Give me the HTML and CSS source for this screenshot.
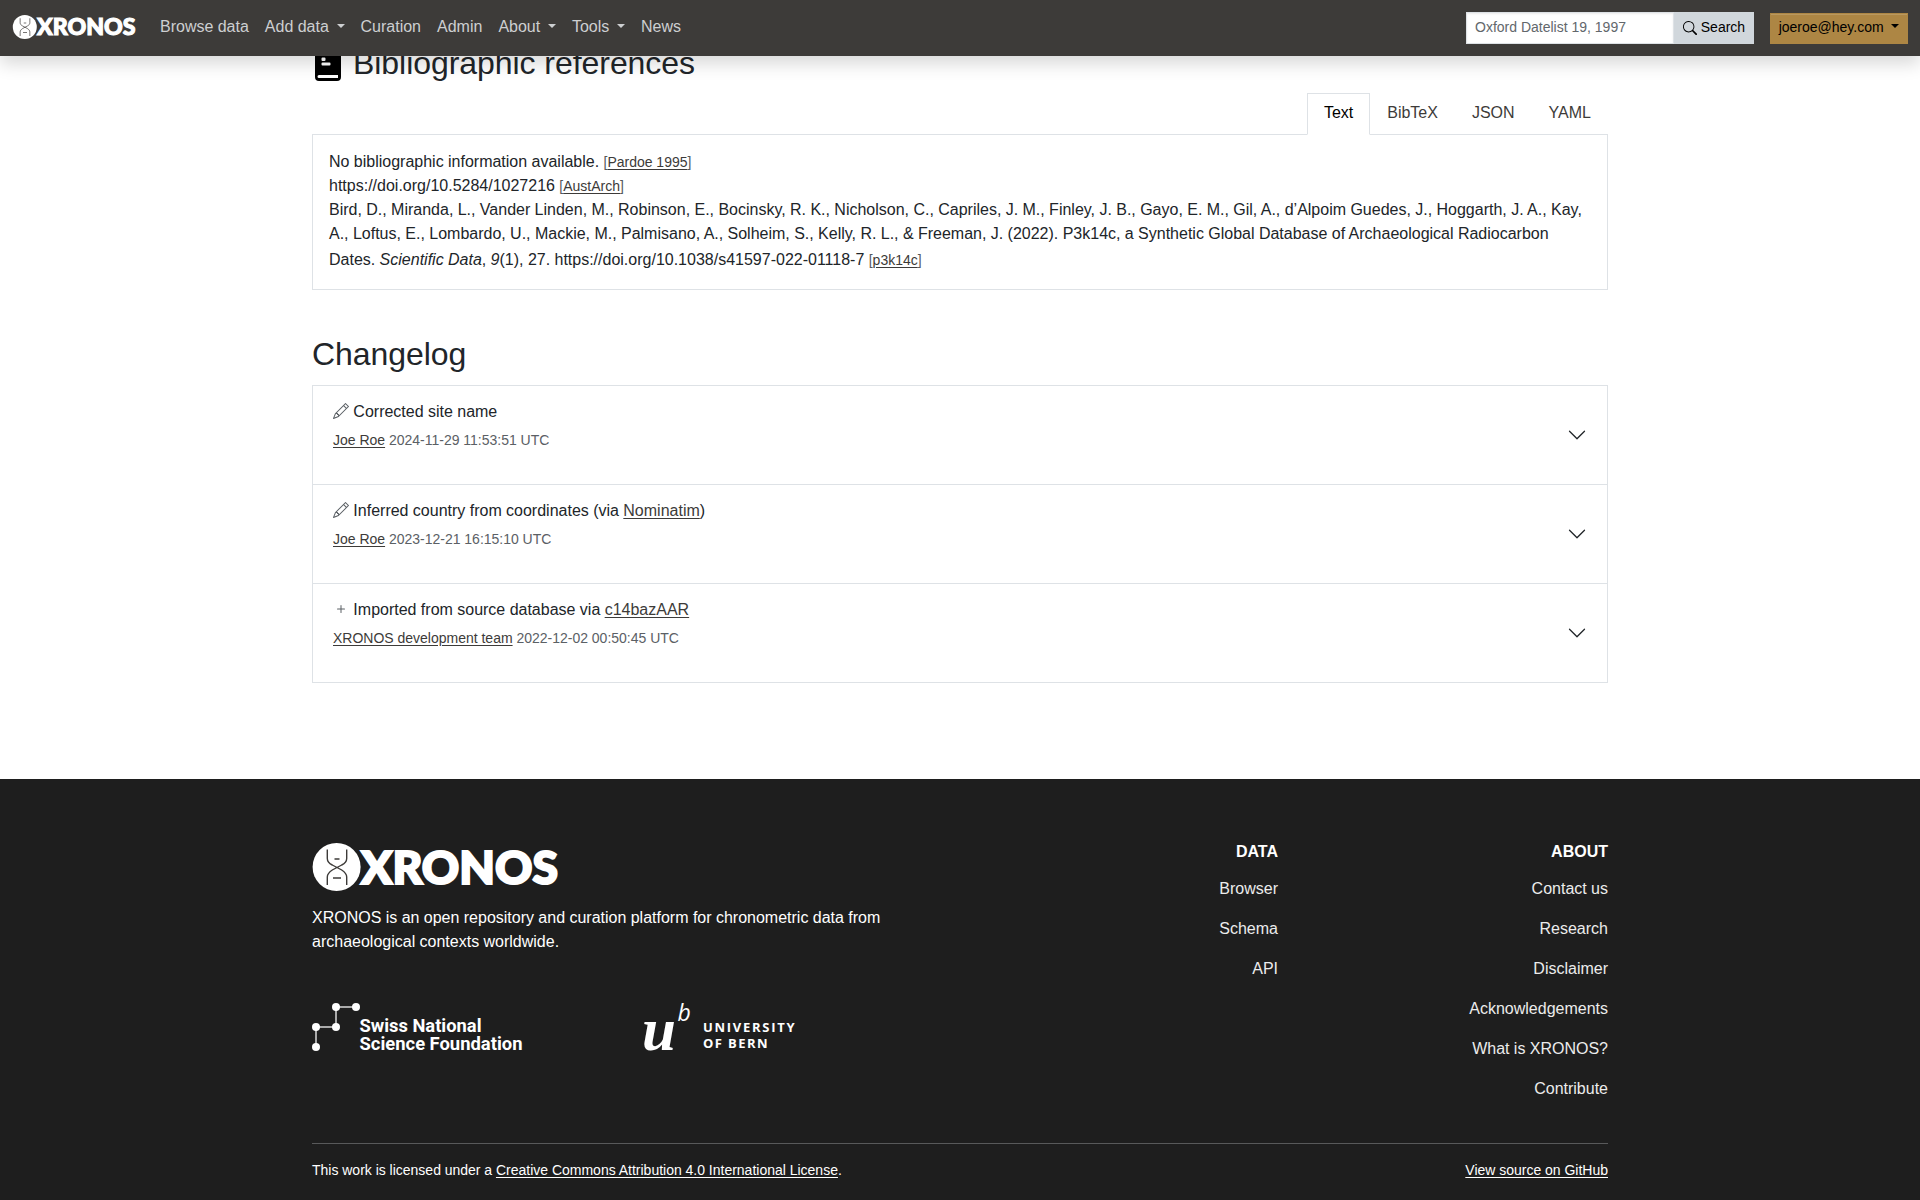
FILE: index.html
```html
<!DOCTYPE html>
<html lang="en">
<head>
<meta charset="utf-8">
<title>XRONOS</title>
<link rel="stylesheet" href="styles.css">
</head>
<body>
<svg class="defs" width="0" height="0">
  <symbol id="logo" viewBox="0 0 248 48">
    <circle cx="24.600" cy="24" r="24" fill="#fff"/>
    <path d="M15.300 6.500v9c0 3 2 5 5 6.500l9.400 5c3 2 5 4 5 7v8M34.700 6.500v9c0 3-2 5-5 6.500l-9.400 5c-3 2-5 4-5 7v8M22.500 16h5M21 35h8" fill="none" stroke="#3d3b39" stroke-width="1.400"/>
    <text class="logo-word" x="49" y="40.500" textLength="197" lengthAdjust="spacingAndGlyphs">XRONOS</text>
  </symbol>
  <symbol id="pencil" viewBox="0 0 16 16"><path d="M12.146.146a.5.5 0 0 1 .708 0l3 3a.5.5 0 0 1 0 .708l-10 10a.5.5 0 0 1-.168.110l-5 2a.5.5 0 0 1-.65-.65l2-5a.5.5 0 0 1 .11-.168zM11.207 2.500 13.500 4.793 14.793 3.500 12.500 1.207zm1.586 3L10.500 3.207 4 9.707V10h.5a.5.5 0 0 1 .5.5v.5h.5a.5.5 0 0 1 .5.5v.5h.293zm-9.761 5.175-.106.106-1.528 3.821 3.821-1.528.106-.106A.5.5 0 0 1 5 12.500V12h-.5a.5.5 0 0 1-.5-.5V11h-.5a.5.5 0 0 1-.468-.325"/></symbol>
  <symbol id="plus" viewBox="0 0 16 16"><path d="M8 4a.5.5 0 0 1 .5.5v3h3a.5.5 0 0 1 0 1h-3v3a.5.5 0 0 1-1 0v-3h-3a.5.5 0 0 1 0-1h3v-3A.5.5 0 0 1 8 4"/></symbol>
  <symbol id="chevron" viewBox="0 0 16 16"><path fill-rule="evenodd" d="M1.646 4.646a.5.5 0 0 1 .708 0L8 10.293l5.646-5.647a.5.5 0 0 1 .708.708l-6 6a.5.5 0 0 1-.708 0l-6-6a.5.5 0 0 1 0-.708"/></symbol>
</svg>

<nav class="navbar">
  <a class="brand"><svg class="brand-logo"><use href="#logo"/></svg></a>
  <div class="nav-links">
    <a>Browse data</a><a class="caret">Add data</a><a>Curation</a><a>Admin</a><a class="caret">About</a><a class="caret">Tools</a><a>News</a>
  </div>
  <form class="search">
    <input type="text" placeholder="Oxford Datelist 19, 1997">
    <button type="button"><svg class="search-icon" viewBox="0 0 16 16"><path d="M11.742 10.344a6.500 6.500 0 1 0-1.397 1.398h-.001q.044.060.098.115l3.850 3.850a1 1 0 0 0 1.415-1.414l-3.850-3.850a1 1 0 0 0-.115-.1zM12 6.500a5.500 5.500 0 1 1-11 0 5.500 5.500 0 0 1 11 0"/></svg> Search</button>
  </form>
  <button type="button" class="user caret">joeroe@hey.com</button>
</nav>

<main class="container">
  <h2 class="refs-title"><svg class="book" viewBox="0 0 26 32"><path fill-rule="evenodd" d="M4 0h18a4 4 0 0 1 4 4v24a4 4 0 0 1-4 4H4a4 4 0 0 1-4-4V4a4 4 0 0 1 4-4zM4 26a1.500 1.500 0 0 0 0 3H23v-3zM7.500 8.500a1 1 0 0 0-1 1V11a1 1 0 0 0 1 1h2a1 1 0 0 0 1-1V9.500a1 1 0 0 0-1-1zM7.500 13.500a1 1 0 0 0-1 1v1a1 1 0 0 0 1 1h7a1 1 0 0 0 1-1v-1a1 1 0 0 0-1-1z"/></svg><span>Bibliographic references</span></h2>
  <div class="tabs"><a class="active">Text</a><a>BibTeX</a><a>JSON</a><a>YAML</a></div>
  <div class="refs">
    <div>No bibliographic information available. <small>[<a>Pardoe 1995</a>]</small></div>
    <div>https://doi.org/10.5284/1027216 <small>[<a>AustArch</a>]</small></div>
    <div>Bird, D., Miranda, L., Vander Linden, M., Robinson, E., Bocinsky, R. K., Nicholson, C., Capriles, J. M., Finley, J. B., Gayo, E. M., Gil, A., d’Alpoim Guedes, J., Hoggarth, J. A., Kay, A., Loftus, E., Lombardo, U., Mackie, M., Palmisano, A., Solheim, S., Kelly, R. L., &amp; Freeman, J. (2022). P3k14c, a Synthetic Global Database of Archaeological Radiocarbon <span class="tail">Dates. <i>Scientific Data</i>, <i>9</i>(1), 27. https://doi.org/10.1038/s41597-022-01118-7 <small>[<a>p3k14c</a>]</small></span></div>
  </div>

  <h2 class="log-title">Changelog</h2>
  <div class="log">
    <div class="entry">
      <div><p><svg class="icon"><use href="#pencil"/></svg> Corrected site name</p>
      <p class="meta"><a>Joe Roe</a> 2024-11-29 11:53:51 UTC</p></div>
      <svg class="chev"><use href="#chevron"/></svg>
    </div>
    <div class="entry">
      <div><p><svg class="icon"><use href="#pencil"/></svg> Inferred country from coordinates (via <a>Nominatim</a>)</p>
      <p class="meta"><a>Joe Roe</a> 2023-12-21 16:15:10 UTC</p></div>
      <svg class="chev"><use href="#chevron"/></svg>
    </div>
    <div class="entry">
      <div><p><svg class="icon"><use href="#plus"/></svg> Imported from source database via <a>c14bazAAR</a></p>
      <p class="meta"><a>XRONOS development team</a> 2022-12-02 00:50:45 UTC</p></div>
      <svg class="chev"><use href="#chevron"/></svg>
    </div>
  </div>
</main>

<footer>
  <div class="container">
    <div class="footer-top">
      <div class="about">
        <svg class="footer-logo"><use href="#logo"/></svg>
        <p>XRONOS is an open repository and curation platform for chronometric data from archaeological contexts worldwide.</p>
        <div class="sponsors">
          <svg class="snsf" viewBox="0 0 212 50">
            <path d="M4 45V25H24V5H44" fill="none" stroke="#aaa" stroke-width="2"/>
            <g fill="#fff"><circle cx="4" cy="45" r="4"/><circle cx="4" cy="25" r="4"/><circle cx="24" cy="25" r="4"/><circle cx="24" cy="5" r="4"/><circle cx="44" cy="5" r="4"/>
            <text x="47.500" y="30" textLength="122" lengthAdjust="spacingAndGlyphs">Swiss National</text>
            <text x="47.500" y="48.300" textLength="163" lengthAdjust="spacingAndGlyphs">Science Foundation</text></g>
          </svg>
          <svg class="bern" viewBox="0 0 154 50">
            <g fill="#fff"><text class="bern-u" x="-1" y="47.500">u</text>
            <text class="bern-b" x="34.500" y="19">b</text>
            <text class="bern-t" x="60" y="29.700" textLength="91.500">UNIVERSITY</text>
            <text class="bern-t" x="60" y="45.700" textLength="64.500">OF BERN</text></g>
          </svg>
        </div>
      </div>
      <div class="links"><h5>DATA</h5><a>Browser</a><a>Schema</a><a>API</a></div>
      <div class="links"><h5>ABOUT</h5><a>Contact us</a><a>Research</a><a>Disclaimer</a><a>Acknowledgements</a><a>What is XRONOS?</a><a>Contribute</a></div>
    </div>
    <div class="footer-bottom"><span>This work is licensed under a <a>Creative Commons Attribution 4.0 International License</a>.</span><a>View source on GitHub</a></div>
  </div>
</footer>
</body>
</html>
```
FILE: styles.css
```css
* { box-sizing: border-box; }
html { height: 1200px; overflow: hidden; }
body { margin: 0; font: 16px/24px "Liberation Sans", Arial, sans-serif; word-spacing: -.08px; color: #212529; background: #fff; }
h2, h5, p { margin: 0; }
.defs { position: absolute; }
.container { width: 1296px; margin: 0 auto; }

.navbar { position: relative; z-index: 1; height: 56px; padding: 0 12px; display: flex; align-items: center; background: #3d3b39; box-shadow: 0 8px 16px rgba(0,0,0,.15); }
.brand { margin-right: 15px; display: flex; margin-top: -2px; }
.brand-logo { width: 125px; height: 24px; overflow: visible; }
.logo-word { font: 900 46px Lato, sans-serif; fill: #fff; stroke: #fff; stroke-width: 2.2px; }
.nav-links { display: flex; flex: 1; margin-top: -3px; color: #cdcfd1; }
.nav-links a { padding: 0 8px; }
.caret::after { content: ""; display: inline-block; margin-left: 7.700px; vertical-align: 4px; border: 4.200px solid transparent; border-top-color: currentColor; border-bottom: 0; }
.search { display: flex; height: 32px; width: 288px; margin-right: 16px; }
.search input { width: 208px; border: 1px solid #dee2e6; padding: 0 8px 2px; font: 14px "Liberation Sans", sans-serif; box-shadow: inset 0 1px 2px rgba(0,0,0,.075); }
.search input::placeholder { color: #62676c; opacity: 1; }
.search button { width: 80px; padding: 0 0 2px; border: 0; background: #d1d7dc; color: #000; font: 14px "Liberation Sans", sans-serif; }
.search-icon { width: 14px; height: 14px; vertical-align: -3px; }
.user { width: 138px; height: 31px; padding: 0 0 2px; border: 1px solid #ad8644; background: #ad8644; box-shadow: inset 0 1px 0 rgba(255,255,255,.15); color: #000; font: 14px "Liberation Sans", sans-serif; }

.refs-title { display: flex; height: 38px; margin-top: -12px; font-weight: 400; font-size: 32px; line-height: 38px; letter-spacing: -.05px; }
.book { width: 26px; height: 32px; margin: 5px 12px 0 3px; fill: #000; }
.tabs { display: flex; justify-content: flex-end; height: 42px; margin-top: 11px; color: #3d3b39; }
.tabs a { padding: 7px 16px; border: 1px solid transparent; }
.tabs .active { border-color: #dee2e6 #dee2e6 #fff; color: #000; z-index: 1; background: #fff; }
.refs { height: 156px; margin-top: -1px; padding: 15px 16px; border: 1px solid #dee2e6; }
a { color: inherit; }
small { font-size: 14px; color: #55595c; }
small a, .entry a, .footer-bottom a { color: #3d3b39; text-decoration: underline; text-underline-offset: 2px; }
.tail { display: inline-block; line-height: 28px; }

.log-title { margin-top: 45px; height: 50px; font-weight: 400; font-size: 32px; line-height: 38px; letter-spacing: -.05px; }
.log { border: 1px solid #dee2e6; border-bottom: 0; }
.entry { display: flex; justify-content: space-between; align-items: center; height: 99px; padding: 0 20px; border-bottom: 1px solid #dee2e6; }
.entry > div { height: 70px; }
.icon { width: 16px; height: 16px; vertical-align: -2px; fill: #5b6065; }
.meta { margin-top: 4px; font-size: 14px; color: #5b6065; }
.chev { width: 20px; height: 20px; fill: #212529; }

footer { margin-top: 96px; height: 421px; padding-top: 64px; background: #1e1e1e; color: #fff; }
.footer-top { display: flex; height: 300px; }
.about { width: 636px; }
.footer-logo { display: block; width: 248px; height: 48px; overflow: visible; }
.about p { width: 600px; margin-top: 15px; }
.sponsors { display: flex; gap: 119px; margin-top: 48px; }
.snsf { width: 212px; height: 50px; font: 700 17.500px Roboto, sans-serif; }
.bern { width: 154px; height: 50px; overflow: visible; }
.bern-u { font: italic 700 61px "Liberation Serif", serif; }
.bern-b { font: italic 23px "Open Sans", sans-serif; }
.bern-t { font: 700 13px "Open Sans", sans-serif; }
.links { width: 330px; display: flex; flex-direction: column; text-align: right; gap: 16px; color: #ececec; }
.links h5 { font-size: 16px; line-height: 17px; margin-bottom: 1px; color: #fff; }
.footer-bottom { display: flex; justify-content: space-between; border-top: 1px solid #58595a; padding-top: 14px; font-size: 14px; }
.footer-bottom a { color: #fff; }
```
